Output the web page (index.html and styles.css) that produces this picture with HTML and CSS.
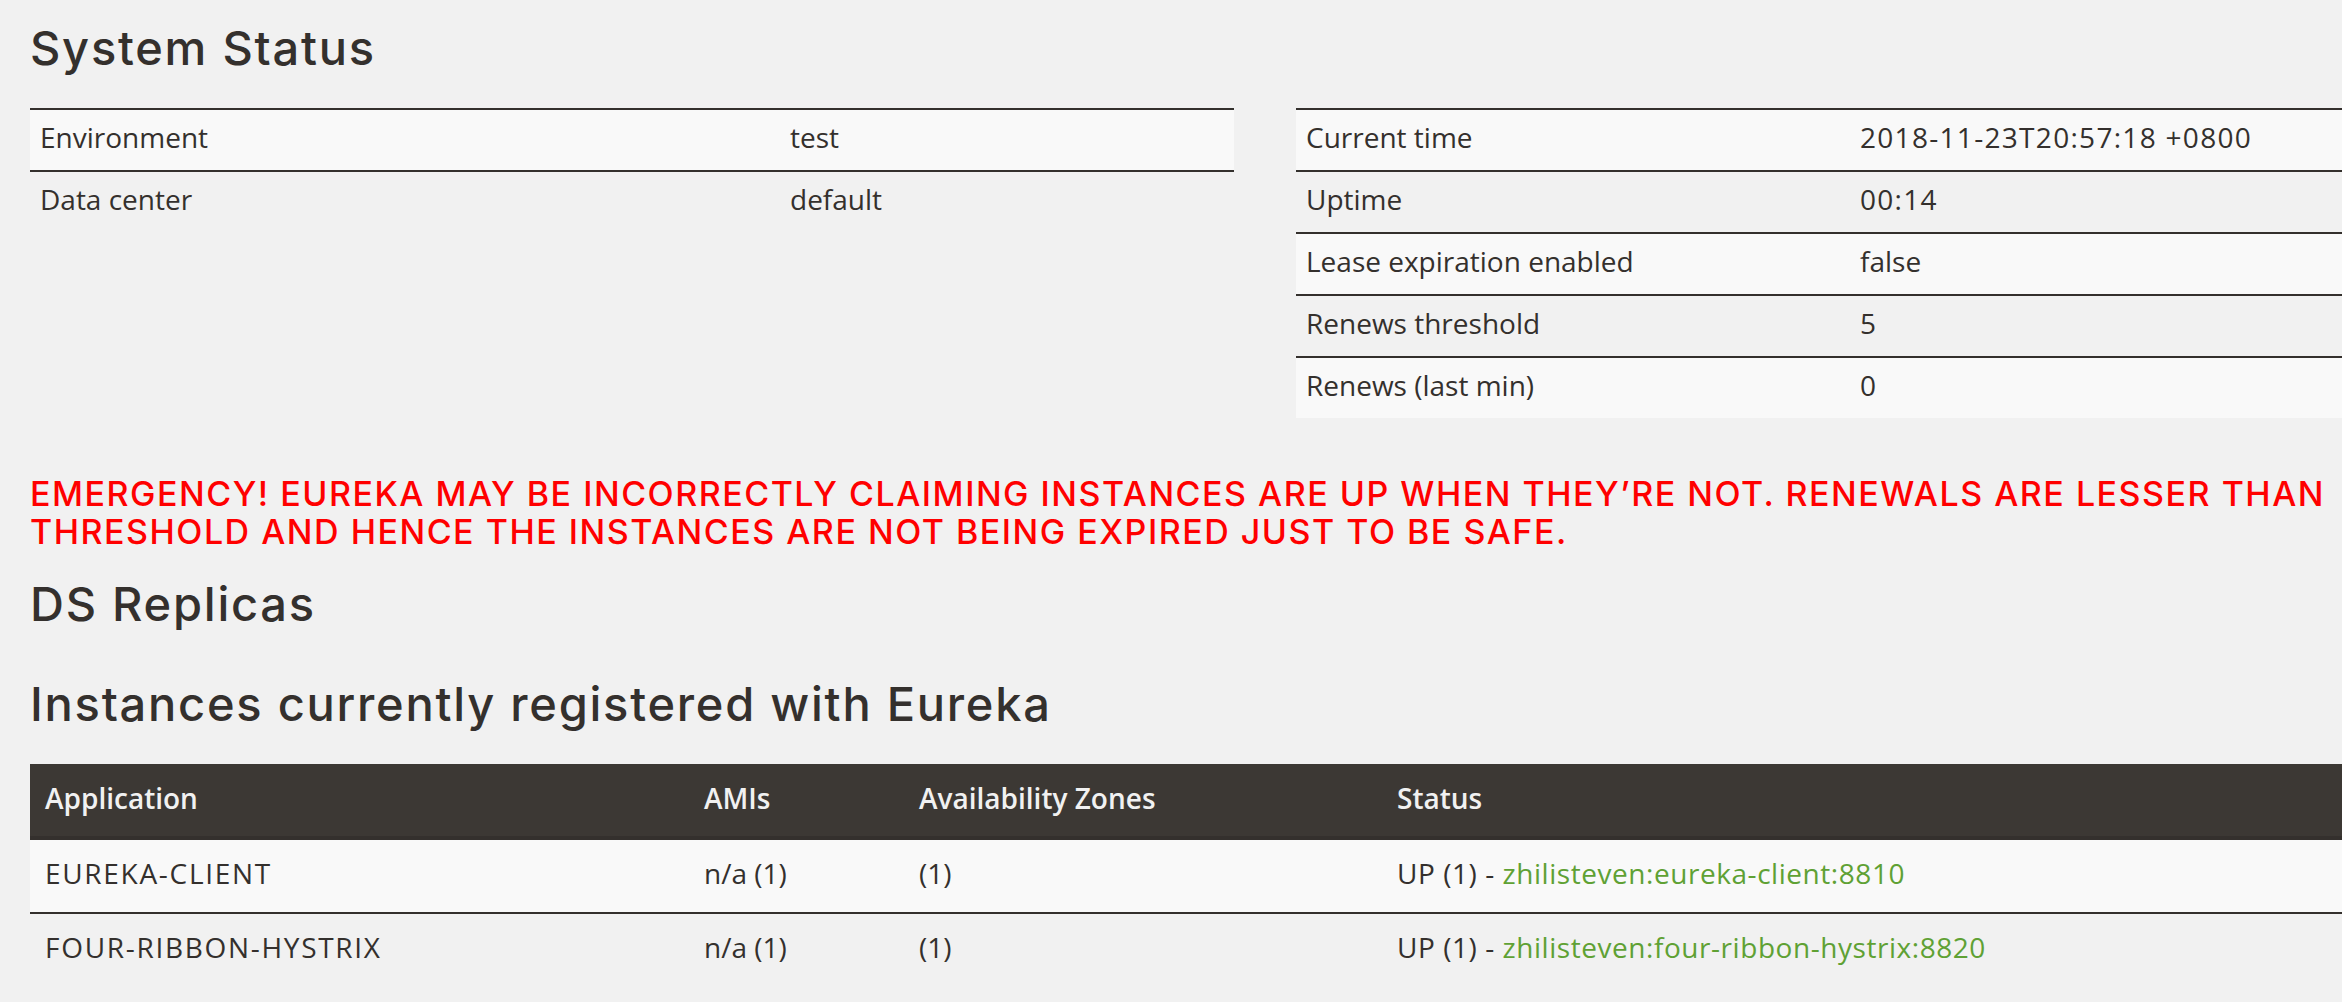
FILE: index.html
```html
<!DOCTYPE html>
<html lang="en">
<head>
<meta charset="utf-8">
<title>Eureka</title>
<link rel="stylesheet" href="styles.css">
</head>
<body>
<div class="page">
  <div class="container">
    <h1 class="title t-system">System Status</h1>
    <div class="status-row">
      <table class="kv kv-left">
        <tbody>
          <tr class="odd"><td class="k">Environment</td><td>test</td></tr>
          <tr><td class="k">Data center</td><td>default</td></tr>
        </tbody>
      </table>
      <table class="kv kv-right">
        <tbody>
          <tr class="odd"><td class="k">Current time</td><td class="num">2018-11-23T20:57:18 +0800</td></tr>
          <tr><td class="k">Uptime</td><td class="num">00:14</td></tr>
          <tr class="odd"><td class="k">Lease expiration enabled</td><td>false</td></tr>
          <tr><td class="k">Renews threshold</td><td class="num">5</td></tr>
          <tr class="odd"><td class="k">Renews (last min)</td><td class="num">0</td></tr>
        </tbody>
      </table>
    </div>
    <h4 class="emergency">EMERGENCY! EUREKA MAY BE INCORRECTLY CLAIMING INSTANCES ARE UP WHEN THEY’RE NOT. RENEWALS ARE LESSER THAN<br>THRESHOLD AND HENCE THE INSTANCES ARE NOT BEING EXPIRED JUST TO BE SAFE.</h4>
    <h1 class="title t-ds">DS Replicas</h1>
    <h1 class="title t-inst">Instances currently registered with Eureka</h1>
    <table class="instances">
      <thead>
        <tr>
          <th class="c-app">Application</th>
          <th class="c-ami">AMIs</th>
          <th class="c-az">Availability Zones</th>
          <th class="c-status">Status</th>
        </tr>
      </thead>
      <tbody>
        <tr class="odd">
          <td class="app">EUREKA-CLIENT</td>
          <td>n/a (1)</td>
          <td>(1)</td>
          <td class="status">UP (1) - <a href="#">zhilisteven:eureka-client:8810</a></td>
        </tr>
        <tr>
          <td class="app">FOUR-RIBBON-HYSTRIX</td>
          <td>n/a (1)</td>
          <td>(1)</td>
          <td class="status">UP (1) - <a href="#">zhilisteven:four-ribbon-hystrix:8820</a></td>
        </tr>
      </tbody>
    </table>
  </div>
</div>
</body>
</html>
```
FILE: styles.css
```css
html, body {
  margin: 0;
  padding: 0;
}
body {
  background: #f1f1f1;
  color: #34302d;
  font-family: "Open Sans", "Noto Sans", sans-serif;
  font-size: 28px;
  overflow: hidden;
}
.page {
  width: 2342px;
  height: 1002px;
  overflow: hidden;
}
.container {
  width: 2500px;
  padding: 22px 30px 0;
}
.title {
  margin: 0;
  font-family: Inter, "DejaVu Sans", sans-serif;
  font-weight: 500;
  font-size: 47px;
  line-height: 52px;
  letter-spacing: 1.75px;
}
.status-row {
  display: flex;
  align-items: flex-start;
  gap: 62px;
  margin-top: 34px;
}
.kv {
  flex: none;
  width: 1204px;
  border-collapse: separate;
  border-spacing: 0;
  table-layout: fixed;
}
.kv td {
  border-top: 2px solid #34302d;
  padding: 7px 10px 13px;
  line-height: 40px;
  white-space: nowrap;
}
.kv td.num {
  letter-spacing: 1.3px;
}
.kv .odd td {
  background: #f9f9f9;
}
.kv-left td.k {
  width: 730px;
}
.kv-right td.k {
  width: 534px;
}
.emergency {
  margin: 57px 0 0;
  font-family: Inter, "DejaVu Sans", sans-serif;
  font-weight: 500;
  font-size: 34px;
  line-height: 38px;
  letter-spacing: 1.5px;
  color: #ff0000;
  white-space: nowrap;
}
.t-ds {
  margin-top: 27px;
}
.t-inst {
  margin-top: 48px;
}
.instances {
  width: 2500px;
  margin-top: 34px;
  border-collapse: separate;
  border-spacing: 0;
  table-layout: fixed;
}
.instances th {
  background: #3c3834;
  color: #f1f1f1;
  text-align: left;
  font-weight: 600;
  padding: 14px 15px 18px;
  line-height: 40px;
  border-bottom: 2px solid #34302d;
}
.instances td {
  border-top: 2px solid #34302d;
  padding: 13px 15px 19px;
  line-height: 40px;
  white-space: nowrap;
}
.instances td.app {
  letter-spacing: 1.7px;
}
.instances td.status {
  letter-spacing: 0.55px;
}
.instances .odd td {
  background: #f9f9f9;
}
.instances .c-app {
  width: 629px;
}
.instances .c-ami {
  width: 185px;
}
.instances .c-az {
  width: 448px;
}
.instances a {
  color: #5fa134;
  text-decoration: none;
}
```
